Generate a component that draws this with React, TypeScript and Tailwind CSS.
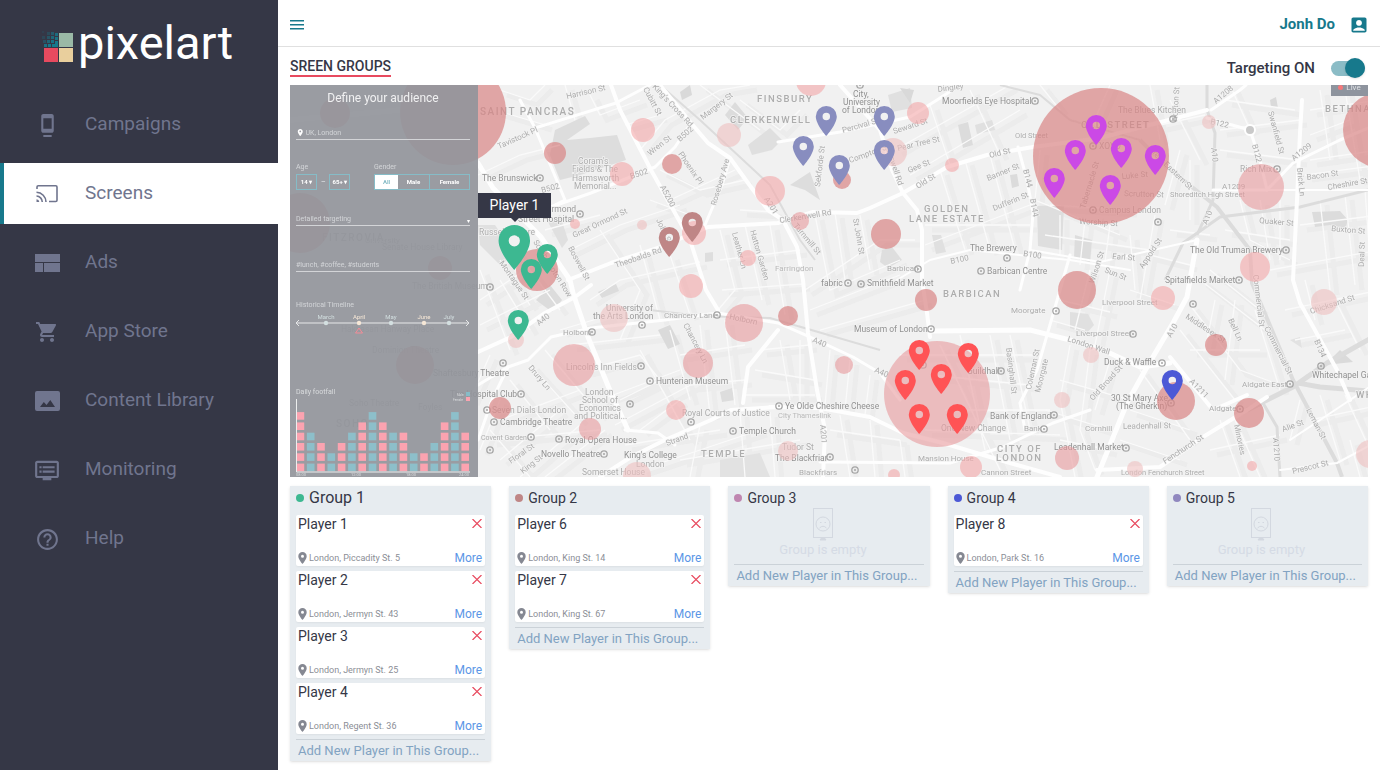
import React, { useState } from "react";
import { MdAccountBox, MdDock, MdDvr, MdHelpOutline, MdPlace, MdShoppingCart } from "react-icons/md";

/* ---------- Sidebar ---------- */

function LogoMark() {
  const cells: [number, number, number, number][] = [
    [0, 0, 2, 0.15], [5, 1, 3, 0.3], [9, 1, 3, 0.55], [13, 2, 3, 0.8],
    [0, 5, 3, 0.25], [5, 5, 3, 0.45], [9, 5, 3, 0.75], [13, 6, 3, 0.9],
    [1, 9, 3, 0.4], [5, 9, 3, 0.7], [9, 9, 3, 0.9], [13, 10, 3, 1],
    [2, 13, 3, 0.9], [6, 13, 3, 1], [10, 13, 3, 1], [13, 13, 3, 1],
  ];
  return (
    <svg width="32" height="34" viewBox="0 0 32 34" aria-hidden="true">
      {cells.map(([x, y, s, o], i) => (
        <rect key={i} x={x} y={y + 1} width={s} height={s} fill="#17798c" opacity={o} />
      ))}
      <rect x="17" y="3" width="14" height="14" fill="#9ab9a6" />
      <rect x="2" y="18" width="14" height="14" fill="#e84a5f" />
      <rect x="17" y="18" width="14" height="14" fill="#e9cf9d" />
    </svg>
  );
}

function CastIcon() {
  return (
    <svg width="22" height="20" viewBox="0 0 22 20" fill="none" stroke="currentColor" strokeWidth="1.6">
      <path d="M1 5V3q0-1.2 1.2-1.2h17.6Q21 1.800 21 3v13.300q0 1.200-1.200 1.200H13" />
      <path d="M.5 8.300a9.700 9.700 0 0 1 9.500 9.700M.5 12a6 6 0 0 1 5.800 6" />
      <path d="M.5 15.200A3 3 0 0 1 3.300 18H.5z" fill="currentColor" stroke="none" />
    </svg>
  );
}

function AdsIcon() {
  return (
    <svg width="25" height="18" viewBox="0 0 25 18" fill="currentColor">
      <path d="M0 0h25v8H0zM0 9h8v9H0zM9 9h16v9H9z" />
    </svg>
  );
}

function PictureIcon() {
  return (
    <svg width="25" height="20" viewBox="0 0 25 20" fill="currentColor" fillRule="evenodd">
      <path d="M2 0h21a2 2 0 0 1 2 2v16a2 2 0 0 1-2 2H2a2 2 0 0 1-2-2V2a2 2 0 0 1 2-2zM5 16h15l-4.700-7-3.800 5-2.700-3z" />
    </svg>
  );
}

const NAV = [
  { label: "Campaigns", icon: <MdDock size={25} /> },
  { label: "Screens", icon: <CastIcon />, active: true },
  { label: "Ads", icon: <AdsIcon /> },
  { label: "App Store", icon: <MdShoppingCart size={24} /> },
  { label: "Content Library", icon: <PictureIcon /> },
  { label: "Monitoring", icon: <MdDvr size={27} /> },
  { label: "Help", icon: <MdHelpOutline size={25} /> },
];

function Sidebar() {
  return (
    <aside className="flex w-[278px] shrink-0 flex-col bg-[#353746]">
      <a href="#home" className="flex h-[94px] items-center gap-1 pl-[42px] text-white">
        <LogoMark />
        <span className="pb-[10px] text-[47px] leading-none">pixelart</span>
      </a>
      <nav className="flex flex-col gap-2">
        {NAV.map((n) => (
          <a
            key={n.label}
            href="#nav"
            className={
              n.active
                ? "flex h-[61px] items-center gap-[25px] border-l-4 border-[#17798c] bg-white pb-[2px] pl-[30px] text-[19px] text-[#70758e]"
                : "flex h-[61px] items-center gap-[25px] border-l-4 border-transparent pb-[2px] pl-[30px] text-[19px] text-[#70758e]"
            }
          >
            <span className="flex w-[26px] justify-center pt-[3px]">{n.icon}</span>
            <span className="leading-6">{n.label}</span>
          </a>
        ))}
      </nav>
    </aside>
  );
}

/* ---------- Map ---------- */

const ROADS: [string, number][] = [
  ["M611 85L620 110L651 170L690 240L706 290L718 310", 4],
  ["M535 128L616 103L650 85", 3],
  ["M520 100L535 128L565 200L551 207", 3],
  ["M290 120L400 110L478 163L493 188L541 237L570 280L573 293L588 337L611 393L628 430", 5],
  ["M568 280L611 263L658 248L708 227L778 223L813 212L857 213L870 208L903 193L947 167L987 155L1033 147L1100 138L1207 110", 4],
  ["M551 207L591 193L655 167L675 147L691 123", 3],
  ["M660 85L691 123L708 143L730 158L748 183L768 210L783 220L797 247L803 280L808 333L817 390L825 430L823 477", 4],
  ["M730 158L722 185L705 225", 3],
  ["M778 142L840 132L910 117L937 100L960 85", 3],
  ["M840 85L880 130L892 170L903 193L917 210L922 230L922 280L927 313L930 337", 4],
  ["M1018 147L1027 180L1033 213L1030 250L1020 290", 3],
  ["M897 280L930 260L970 250L1070 260L1130 270", 2],
  ["M930 331L1030 330L1070 340L1103 350L1140 367L1170 363", 5],
  ["M1070 255L1060 290L1037 370L1020 403L1025 430", 3],
  ["M770 407L820 408L870 417L903 433L943 443L1010 463L1060 477", 4],
  ["M820 462L950 463L1003 447L1053 423L1090 410", 3],
  ["M478 352L511 337L545 313L575 297L591 285", 4],
  ["M478 385L508 367L528 360L551 337L591 328L665 320L718 313L778 323L810 337L853 357L880 373L900 400", 3],
  ["M600 477L631 457L665 440L711 420L731 410L778 407", 4],
  ["M778 330L748 367L743 403", 4],
  ["M625 430L658 433L675 445", 3],
  ["M478 440L492 400L508 367", 3],
  ["M1197 240L1187 297L1173 323L1147 367L1127 403L1097 477", 5],
  ["M1170 357L1213 410L1247 395", 4],
  ["M1097 470L1160 467L1203 437L1247 410L1267 397", 4],
  ["M1207 118L1250 130L1260 160L1267 190", 3],
  ["M1213 190L1267 190L1293 163L1340 140L1380 123", 3],
  ["M1302 100L1300 133L1297 200L1293 280L1300 303L1337 370L1350 400", 4],
  ["M1213 190L1380 190", 2],
  ["M1290 440L1350 400L1380 380", 2],
  ["M1280 470L1337 463L1380 440", 2],
  ["M1030 250L1100 262L1197 240", 2],
  ["M1211 110L1240 90L1246 85", 3],
];

const DARK_ROADS: [string, number][] = [
  ["M1207 85L1207 110L1215 133L1213 200L1197 235", 3],
  ["M1140 140L1167 167L1217 207L1250 250L1252 283L1293 380L1337 463L1342 477", 4],
  ["M1380 187L1300 207L1220 217L1183 243L1165 280", 3],
  ["M1247 410L1293 387L1327 363L1380 333", 5],
  ["M1298 383L1320 387L1380 392", 5],
  ["M1263 403L1277 427L1280 477", 3],
  ["M1000 85L1040 95L1070 120L1140 140", 2],
  ["M660 85L700 120L770 185L800 240L815 260", 2],
  ["M650 310L700 316L770 318L880 350", 2],
];

const MINOR_ROADS = [
  "M478 175L520 155L560 145M495 110L545 125M500 90L530 100L545 85M545 230L600 215M530 305L500 260",
  "M565 85L575 120M590 95L600 115L640 100M625 125L660 115M640 150L665 120L720 90L750 85",
  "M660 170L700 190L745 180M650 200L690 215M670 200L735 170M740 100L780 130L800 110M700 85L760 130",
  "M570 250L620 225L680 205M590 300L620 280L700 262M600 230L640 290L620 340M640 245L660 320M670 255L690 315",
  "M720 230L735 290L718 310M745 225L762 300M770 225L785 315M720 260L800 250M722 290L803 284M740 210L775 212",
  "M815 215L830 290L900 260M835 213L845 280M860 215L870 270M805 290L880 240L915 240M810 310L900 275M820 330L925 300",
  "M925 225L1030 225M925 245L1030 205M940 170L965 250M965 160L990 250M990 155L1015 250M910 175L1020 110M895 150L1010 85M930 105L950 165M970 90L1000 155",
  "M1040 150L1035 200L1120 235M1050 205L1130 210M1060 215L1060 255M1085 220L1080 265M1110 225L1105 262M1045 235L1150 250M1130 235L1135 290M1155 215L1140 300",
  "M1150 255L1190 265M1130 290L1175 305M1090 270L1075 330M1110 270L1095 345M1060 300L1110 312M1050 320L1085 330",
  "M940 345L1000 470M960 335L985 450M990 335L1010 440M1010 335L1030 430M900 355L1035 355M930 375L1030 385M945 410L1050 410M925 430L1060 435",
  "M1070 345L1060 400L1075 477M1090 350L1080 430L1095 470M1110 360L1095 410M1060 380L1130 400M1045 410L1110 430M1060 440L1110 450M1140 370L1190 440M1130 410L1190 430M1120 440L1180 460",
  "M1190 305L1240 370L1280 385M1180 330L1235 400M1200 280L1265 330M1210 270L1260 310M1190 350L1260 350M1215 300L1205 350M1235 300L1225 380M1255 310L1280 390",
  "M1270 270L1380 250M1285 310L1380 290M1295 340L1345 330M1300 225L1380 215M1320 200L1330 290M1345 195L1355 285M1365 190L1375 330M1335 300L1360 350M1305 280L1315 320",
  "M1220 130L1300 120M1220 150L1300 160M1225 100L1295 110M1240 200L1250 240L1290 260M1225 230L1290 240M1260 200L1270 260M1280 200L1280 260",
  "M1310 110L1380 100M1310 135L1350 120M1310 160L1380 150M1320 90L1330 160M1345 90L1360 180M1305 175L1380 165M1230 85L1250 130",
  "M480 300L540 260M480 325L550 290M500 280L530 330M515 250L560 310M480 270L510 350M490 355L470 400M530 365L580 420M545 350L600 415M510 380L550 430M500 400L480 450M500 420L580 390M490 440L600 430M500 460L560 410M520 477L580 425M545 477L605 430M490 430L530 477",
  "M560 330L610 315M570 345L660 335M585 370L640 355L660 380L620 400M600 400L680 370M615 425L700 380M640 430L680 400M625 445L720 430M640 350L690 440M670 330L690 400M700 325L710 415M725 320L735 405M680 355L745 345M690 385L745 380M640 470L760 430M700 425L690 477M740 412L745 477M770 412L775 477M680 460L800 440",
  "M755 370L815 380M760 350L810 345M745 395L815 395M780 340L790 400M800 340L800 405M830 350L825 405M850 360L845 410M870 375L865 415M830 430L900 440M840 415L850 477M870 420L875 477M900 440L905 477",
  "M1110 85L1090 130M1150 85L1160 140M1040 85L1060 110M1170 100L1200 160M1180 150L1165 205M1190 160L1190 220M1160 125L1205 115M1170 230L1210 235",
  "M1220 420L1240 477M1235 420L1260 477M1210 450L1280 435M1300 400L1290 440M1320 395L1340 460M1345 395L1370 450M1310 420L1380 405M1350 440L1360 477",
];

const BLOCKS: [string, string][] = [
  ["M555 130L585 116L590 124L567 140L590 138L617 135L626 160L580 175L560 180L550 155Z", "#dddddd"],
  ["M725 115L735 102L748 118L738 130Z", "#dcdcdc"],
  ["M680 92L690 85L692 95L682 100Z", "#d9d9d9"],
  ["M748 145L770 128L782 140L772 150L752 155Z", "#dfdfdf"],
  ["M790 185L810 172L820 200L805 190Z", "#dddddd"],
  ["M888 95L910 88L912 108L892 112Z", "#e0e0e0"],
  ["M958 125L968 122L973 145L963 148Z", "#dcdcdc"],
  ["M975 125L992 120L995 130L977 134Z", "#e0e0e0"],
  ["M1037 206L1064 205L1062 250L1038 246Z", "#dedede"],
  ["M1010 175L1017 174L1019 186L1012 188Z", "#dbdbdb"],
  ["M882 250L892 247L902 260L888 268L880 262Z", "#dedede"],
  ["M932 235L941 235L946 252L936 254Z", "#e0e0e0"],
  ["M1075 235L1092 240L1090 262L1074 258Z", "#dddddd"],
  ["M1312 212L1340 211L1348 220L1345 229L1330 225L1315 227Z", "#dcdcdc"],
  ["M1325 365L1340 350L1353 362Z", "#dadada"],
  ["M1070 312L1088 314L1094 325L1086 334L1070 328Z", "#e0e0e0"],
  ["M1270 100L1276 97L1278 108L1271 107Z", "#dadada"],
  ["M658 330L670 325L680 344L668 349Z", "#dadada"],
  ["M598 292L616 284L619 291L602 298Z", "#dcdcdc"],
  ["M536 300L550 285L562 300L552 312Z", "#dcdcdc"],
  ["M720 392L732 388L735 400L722 402Z", "#dddddd"],
  ["M720 460L760 453L770 477L720 477Z", "#e2e2e2"],
  ["M478 225L495 225L515 255L500 265L480 245Z", "#e0e0e0"],
  ["M548 222L560 215L568 240L562 248Z", "#e0e0e0"],
  ["M1290 340L1300 337L1302 348Z", "#e2e2e2"],
  ["M900 88L914 90L910 103Z", "#d9d9d9"],
  ["M705 253L713 252L713 261L705 262Z", "#dedede"],
];

type Label = [text: string, x: number, y: number, size: number, rotate?: number, color?: string];
const G = "#adadad";
const LABELS: Label[] = [
  ["Harrison St", 567, 99, 8, -13], ["Cubitt St", 643, 89, 8, 62], ["King's Cross Rd", 652, 87, 8, 47],
  ["Wren St", 650, 156, 8, -38], ["B502", 680, 142, 8, -42], ["B502", 631, 179, 8, -18], ["B502", 542, 193, 8, -15],
  ["Margery St", 703, 120, 8, -38], ["Tavistock Pl", 499, 149, 8, -24], ["Phoenix Pl", 678, 154, 8, 56],
  ["A5200", 660, 187, 8, 62], ["Rosebery Ave", 716, 206, 8, -74], ["John St", 656, 220, 8, 65],
  ["Great Ormond St", 574, 238, 8, -25], ["Boswell St", 568, 248, 8, 62], ["Theobalds Rd", 616, 268, 8, -19],
  ["Leather Ln", 732, 233, 8, 75], ["Hatton Garden", 750, 231, 8, 74], ["A201", 764, 199, 8, 58],
  ["The Brunswick", 482, 181, 8.5, 0, "#919191"], ["Coram's", 578, 164, 8.5, 0], ["Fields & The", 572, 172, 8.5, 0],
  ["Harmsworth", 572, 181, 8.5, 0], ["Memorial...", 574, 189, 8.5, 0], ["Great Ormond", 523, 212, 8.5, 0, "#9a9a9a"],
  ["Street Hospital", 518, 222, 8.5, 0, "#9a9a9a"], ["Russell Square", 479, 235, 8.5, 0], ["Montague St", 499, 263, 8, 55],
  ["Southampton Row", 533, 242, 8, 58], ["City,", 853, 97, 8.5, 0, "#919191"], ["University", 843, 105, 8.5, 0, "#919191"],
  ["of London", 842, 113, 8.5, 0, "#919191"], ["Percival St", 843, 133, 8, -16], ["Seward St", 894, 134, 8, -18],
  ["Pear Tree St", 898, 151, 8, -13], ["Compton St", 850, 163, 8, -20], ["Gee St", 909, 173, 8, -22],
  ["Old St", 918, 189, 8, -32], ["Old St", 990, 158, 8, -14], ["Banner St", 988, 181, 8, -22],
  ["Dufferin St", 994, 211, 8, -22], ["B144", 1023, 170, 8, 76], ["B144", 1030, 199, 8, 80],
  ["B100", 951, 264, 8, -12], ["B100", 1023, 256, 8, 8], ["Goswell Rd", 886, 148, 8, 72], ["Sekforde St", 820, 187, 8, -83],
  ["Clerkenwell Rd", 780, 223, 8, -9], ["Turnmill St", 793, 226, 8, 50], ["St John St", 853, 219, 8, 80],
  ["Farringdon", 775, 271, 8, 0, "#b9b9b9"], ["Barbican", 887, 271, 8, 0], ["Moorfields Eye Hospital", 942, 104, 8.5, 0, "#919191"],
  ["Dingley", 938, 92, 8, -8], ["Old Street", 1015, 138, 7.5, 0], ["The Brewery", 970, 251, 8.5, 0, "#919191"],
  ["Barbican Centre", 987, 274, 8.5, 0, "#919191"], ["fabric", 821, 286, 8.5, 0, "#919191"],
  ["Smithfield Market", 867, 286, 8.5, 0, "#919191"], ["Museum of London", 854, 332, 8.5, 0, "#919191"],
  ["Moorgate", 1011, 313, 8, 0], ["A40", 812, 342, 8, 22], ["A40", 874, 372, 8, 22], ["A201", 820, 425, 8, 85],
  ["Guildhall", 967, 374, 8.5, 0, "#919191"], ["Basinghall St", 1006, 348, 8, 83], ["Coleman St", 1031, 390, 8, -78],
  ["Moorgate", 1040, 393, 8, -76], ["Ye Olde Cheshire Cheese", 785, 409, 8.5, 0, "#919191"],
  ["City Thameslink", 778, 418, 7.5, 0, "#b9b9b9"], ["Temple Church", 739, 434, 8.5, 0, "#919191"],
  ["Tudor St", 782, 450, 8.5, 0], ["The Blackfriar", 775, 461, 8.5, 0, "#919191"], ["Blackfriars", 799, 475, 8, 0],
  ["Bank of England", 990, 419, 8.5, 0, "#919191"], ["One New Change", 941, 431, 8.5, 0], ["Bank", 1024, 431, 8, 0],
  ["Mansion House", 918, 461, 8, 0], ["Cannon Street", 981, 475, 8, 0], ["Leadenhall Market", 1054, 450, 8.5, 0, "#919191"],
  ["University of", 606, 311, 8.5, 0, "#9c9c9c"], ["the Arts London", 593, 319, 8.5, 0, "#9c9c9c"],
  ["Chancery Lane", 664, 318, 8, 0], ["Holborn", 563, 335, 8, 0], ["Holborn", 729, 319, 8, 12], ["A40", 539, 326, 8, -38],
  ["Chancery Ln", 683, 325, 8, 62], ["Drury Ln", 528, 368, 8, 50], ["Lincoln's Inn Fields", 566, 370, 8.5, 0],
  ["Hunterian Museum", 656, 384, 8.5, 0, "#919191"], ["London", 585, 395, 8.5, 0], ["School of", 582, 403, 8.5, 0],
  ["Economics", 579, 411, 8.5, 0], ["and Political...", 574, 419, 8.5, 0], ["Shaftesbury Theatre", 433, 376, 8.5, 0, "#919191"],
  ["The Hospital Club", 450, 397, 8.5, 0, "#919191"], ["Seven Dials London", 492, 413, 8.5, 0],
  ["Cambridge Theatre", 500, 425, 8.5, 0, "#919191"], ["Covent Garden", 481, 440, 7, 0], ["Floral St", 511, 464, 8, -35],
  ["King St", 523, 474, 8, -38], ["Royal Opera House", 565, 443, 8.5, 0, "#919191"], ["Novello Theatre", 541, 457, 8.5, 0, "#919191"],
  ["King's College", 624, 458, 8.5, 0, "#919191"], ["London", 636, 467, 8.5, 0], ["Somerset House", 582, 475, 8.5, 0],
  ["Strand", 667, 446, 8, -20], ["Royal Courts of Justice", 682, 416, 8.5, 0], ["Hoxton St", 1177, 122, 8, -86],
  ["A1208", 1216, 104, 8, -40], ["The Blues Kitchen", 1118, 113, 8.5, 0], ["B122", 1210, 124, 8, 12], ["B122", 1252, 145, 8, 75],
  ["A10", 1211, 148, 8, 83], ["A10", 1207, 225, 8, -68], ["Swanfield St", 1268, 112, 8, 75], ["A1209", 1294, 161, 8, -38],
  ["A1209", 1222, 189, 8, 0], ["Rich Mix", 1240, 172, 8.5, 0], ["Bacon St", 1307, 180, 8, -8], ["Cheshire St", 1328, 190, 8, -10],
  ["Shoreditch High Street", 1170, 197, 7.5, 0], ["Brick Ln", 1297, 168, 8, 84], ["Great Eastern St", 1148, 150, 8, 44],
  ["Luke St", 1122, 179, 8, -5], ["Scrutton St", 1124, 196, 8, 2], ["Campus London", 1099, 213, 8.5, 0], ["XOYO", 1099, 149, 8.5, 0],
  ["Worship St", 1079, 224, 8, 3], ["Quaker St", 1259, 223, 8, 5], ["Buxton St", 1331, 231, 8, 5], ["Deal St", 1364, 267, 8, -88],
  ["The Old Truman Brewery", 1190, 253, 8.5, 0, "#919191"], ["Spitalfields Market", 1165, 283, 8.5, 0, "#919191"],
  ["Earl St", 1112, 259, 8, 4], ["Sun St", 1104, 272, 8, 22], ["Appold St", 1143, 269, 8, -56], ["Wilson St", 1094, 284, 8, -72],
  ["Tabernacle St", 1085, 209, 8, -73], ["Liverpool Street", 1102, 305, 8, 0], ["Liverpool Street", 1076, 336, 8, 0],
  ["London Wall", 1067, 341, 8, 18], ["A10", 1171, 338, 8, -60], ["Middlesex St", 1185, 318, 8, 33], ["Bell Ln", 1228, 320, 8, 65],
  ["Commercial St", 1253, 275, 8, 83], ["Commercial St", 1264, 328, 8, 63], ["Chicksand St", 1311, 314, 8, -18],
  ["B134", 1314, 341, 8, 66], ["Duck & Waffle", 1104, 365, 8.5, 0, "#919191"], ["A1211", 1189, 382, 8, 45],
  ["Old Broad St", 1093, 401, 8, -48], ["Aldgate East", 1242, 387, 8, 0], ["Aldgate", 1209, 411, 8, 0],
  ["30 St Mary Axe", 1111, 401, 8.5, 0, "#919191"], ["(The Gherkin)", 1116, 409, 8.5, 0, "#919191"],
  ["Cornhill", 1085, 431, 8, 0], ["Leadenhall St", 1123, 429, 8, -1], ["Fenchurch St", 1165, 464, 8, -33],
  ["Minories", 1234, 425, 8, 78], ["London Fenchurch Street", 1121, 475, 7.5, 0], ["Alie St", 1283, 432, 8, -20],
  ["Leman St", 1306, 410, 8, 62], ["A1210", 1273, 438, 8, 86], ["Prescot St", 1293, 474, 8, -14],
  ["Whitechapel Gallery", 1312, 378, 8.5, 0, "#919191"],
  ["University", 365, 243, 8], ["Senate House Library", 382, 250, 8.5], ["The British Museum", 412, 289, 8.5],
  ["Hakkasan Hanway Place", 341, 332, 8.5], ["Dominion Theatre", 372, 353, 8.5], ["Soho Theatre", 349, 406, 8.5], ["Foyles", 418, 410, 8.5],
];

const AREAS: [string, number, number, number][] = [
  ["SAINT PANCRAS", 480, 115, 10], ["FINSBURY", 757, 102, 9.5], ["CLERKENWELL", 730, 123, 9.5],
  ["GOLDEN", 924, 212, 9.5], ["LANE ESTATE", 909, 222, 9.5], ["BARBICAN", 943, 297, 9.5],
  ["OLD STREET", 1081, 128, 9.5], ["BETHNAL", 1325, 112, 9.5], ["CITY OF", 997, 452, 9.5],
  ["LONDON", 996, 461, 9.5], ["TEMPLE", 701, 457, 9.5], ["WHITECHAPEL", 1356, 398, 9.5],
  ["FITZROVIA", 322, 241, 10], ["SOHO", 336, 427, 10],
];

const POIS: [number, number][] = [
  [540, 178], [580, 214], [490, 287], [642, 325], [592, 332], [717, 315], [503, 363], [521, 394], [487, 410], [494, 422],
  [531, 437], [490, 450], [559, 439], [604, 454], [630, 404], [650, 381], [641, 366], [691, 422], [733, 431], [779, 406],
  [830, 457], [855, 470], [848, 283], [861, 284], [918, 269], [931, 329], [1001, 371], [1054, 415], [1044, 429], [1007, 258],
  [981, 271], [1056, 311], [1035, 101], [1173, 119], [1158, 222], [1093, 210], [1277, 169], [1286, 250], [1239, 280],
  [1193, 304], [1133, 334], [1162, 363], [1321, 366], [1290, 384], [1171, 403], [1126, 448], [1240, 409], [860, 85], [1093, 146], [923, 365],
];

const HEAT = { d: "#d88585", m: "#e79a9d", l: "#f3a6a8", f: "#efc0c0" };
const SPOTS: [number, number, number, keyof typeof HEAT][] = [
  [453, 112, 53, "d"], [643, 130, 12, "l"], [555, 153, 11, "d"], [622, 174, 12, "l"], [672, 164, 10, "d"], [729, 135, 12, "f"],
  [770, 191, 15, "l"], [811, 81, 15, "l"], [918, 113, 11, "l"], [893, 152, 14, "f"], [842, 180, 9, "d"], [800, 221, 9, "m"],
  [886, 234, 15, "d"], [952, 165, 7, "l"], [1101, 156, 68, "d"], [1209, 122, 7, "f"], [1261, 187, 23, "m"], [1255, 267, 15, "l"],
  [1381, 130, 38, "d"], [575, 224, 5, "l"], [642, 225, 5, "f"], [694, 233, 12, "l"], [748, 258, 8, "l"], [537, 270, 21, "d"],
  [691, 286, 12, "l"], [614, 318, 14, "f"], [744, 323, 19, "m"], [698, 363, 15, "m"], [574, 365, 21, "m"], [676, 410, 10, "l"],
  [500, 408, 11, "d"], [590, 429, 11, "m"], [637, 476, 14, "f"], [516, 340, 8, "f"], [788, 316, 10, "d"], [926, 300, 11, "d"],
  [844, 365, 9, "m"], [937, 394, 53, "m"], [1077, 290, 19, "d"], [1062, 400, 8, "f"], [788, 451, 10, "f"], [894, 475, 6, "l"],
  [971, 467, 11, "l"], [1067, 458, 12, "m"], [1163, 298, 12, "l"], [1216, 345, 11, "d"], [1324, 302, 13, "f"], [1091, 355, 8, "f"],
  [1176, 401, 19, "d"], [1249, 413, 15, "d"], [1252, 466, 5, "l"], [1135, 469, 8, "f"], [1370, 454, 14, "f"],
  [300, 223, 30, "d"], [415, 365, 19, "d"], [335, 113, 15, "d"], [440, 268, 12, "d"],
];

const PINS: [number, number, string, number?][] = [
  [669, 227, "#bf8686"], [692, 212, "#bf8686"],
  [547, 244, "#3db891"], [531, 259, "#3db891"], [518, 310, "#3db891"], [514, 225, "#3db891", 2.25],
  [826, 106, "#888dbf"], [884, 106, "#888dbf"], [803, 136, "#888dbf"], [884, 140, "#888dbf"], [839, 155, "#888dbf"],
  [1096, 115, "#cb49e6"], [1075, 140, "#cb49e6"], [1121, 138, "#cb49e6"], [1155, 145, "#cb49e6"], [1110, 175, "#cb49e6"], [1054, 168, "#cb49e6"],
  [919, 340, "#ff5355"], [968, 343, "#ff5355"], [905, 370, "#ff5355"], [941, 364, "#ff5355"], [919, 404, "#ff5355"], [957, 404, "#ff5355"],
  [1172, 370, "#4c59d6"],
];

const PIN_PATH = "M0 0a7 7 0 0 0-7 7c0 5.250 7 13 7 13s7-7.750 7-13a7 7 0 0 0-7-7zm0 9.500a2.500 2.500 0 1 1 0-5 2.500 2.500 0 0 1 0 5z";

function CityMap() {
  return (
    <svg
      className="absolute inset-0 size-full"
      viewBox="290 85 1078 392"
      preserveAspectRatio="xMinYMin slice"
      role="img"
      aria-label="Audience heat map of London"
    >
      <rect x="290" y="85" width="2000" height="800" fill="#f1f1f1" />
      <g fill="none" stroke="#ebebeb" strokeWidth="5" opacity="0.9">
        {MINOR_ROADS.map((d, i) => <path key={i} d={d} transform="translate(7 5)" />)}
      </g>
      {BLOCKS.map(([d, fill], i) => <path key={i} d={d} fill={fill} />)}
      <g fill="none" stroke="#fafafa" strokeWidth="1.300">
        {MINOR_ROADS.map((d, i) => <path key={i} d={d} />)}
      </g>
      <g fill="none" stroke="#dcdcdc" strokeLinejoin="round">
        {DARK_ROADS.map(([d, w], i) => <path key={i} d={d} strokeWidth={w} />)}
      </g>
      <g fill="none" stroke="#fefefe" strokeLinejoin="round" strokeLinecap="round">
        {ROADS.map(([d, w], i) => <path key={i} d={d} strokeWidth={w} />)}
      </g>
      <circle cx="1250" cy="130" r="5" fill="#c9c9c9" stroke="#fff" strokeWidth="2" />
      <g fontFamily="Roboto, sans-serif" stroke="#f3f3f3" strokeWidth="1.500" paintOrder="stroke">
        {LABELS.map(([t, x, y, s, r = 0, c = G], i) => (
          <text key={i} fontSize={s} fill={c} transform={`translate(${x} ${y}) rotate(${r})`}>{t}</text>
        ))}
        {AREAS.map(([t, x, y, s]) => (
          <text key={t + y} x={x} y={y} fontSize={s} fontWeight="500" letterSpacing="1.500" fill="#adadad">{t}</text>
        ))}
      </g>
      {POIS.map(([x, y], i) => (
        <g key={i} fill="none" stroke="#a6a6a6">
          <circle cx={x} cy={y} r="3.200" strokeWidth="1.300" />
          <path d={`M${x - 1} ${y}h2`} strokeWidth="1.500" />
        </g>
      ))}
      {SPOTS.map(([x, y, r, k], i) => <circle key={i} cx={x} cy={y} r={r} fill={HEAT[k]} opacity={k === "d" ? 0.7 : 0.6} />)}
      {PINS.map(([x, y, c, s = 1.5], i) => (
        <path key={i} d={PIN_PATH} fill={c} fillRule="evenodd" transform={`translate(${x + 0.3} ${y}) scale(${s})`} />
      ))}
    </svg>
  );
}

/* ---------- Audience panel ---------- */

const BARS = [6, 4, 3, 2, 3, 4, 5, 6, 5, 4, 4, 2, 2, 3, 5, 6, 4];

function Footfall() {
  return (
    <svg className="mt-[51px] w-full" viewBox="296 387 174 90" role="img" aria-label="Daily footfall">
      <g fill="#d8dadc">
        <text x="296" y="394" fontSize="7">Daily footfall</text>
        <text x="457" y="396" fontSize="3">Male</text>
        <text x="453" y="401" fontSize="3">Female</text>
        <text x="296" y="476" fontSize="4">08:00</text>
        <text x="351" y="476" fontSize="4">12:00</text>
        <text x="406" y="476" fontSize="4">18:00</text>
        <text x="459" y="476" fontSize="4">24:00</text>
      </g>
      <rect x="466" y="392" width="4" height="4" fill="#86bcc7" />
      <rect x="466" y="397" width="4" height="4" fill="#fba3b0" />
      {BARS.map((n, i) =>
        Array.from({ length: n }, (_, j) => (
          <rect key={`${i}-${j}`} x={296.6 + i * 10.3} y={463.6 - j * 10.3} width="7.600" height="7.600" fill={i % 2 ? "#8dbfca" : "#fba3b0"} />
        )),
      )}
      <path d="M296.500 399v73h173.500" fill="none" stroke="#eceded" />
    </svg>
  );
}

function Timeline() {
  const months: [string, number, string][] = [
    ["March", 326, "#d3dfe0"], ["April", 359, "#f6e7d6"], ["May", 391, "#d3dfe0"], ["June", 424, "#f6e7d6"], ["July", 449, "#d3dfe0"],
  ];
  return (
    <svg className="w-full" viewBox="296 310 174 26" role="img" aria-label="Historical timeline">
      <path d="M296 323h173M299 320l-3 3 3 3M466 320l3 3-3 3" fill="none" stroke="#e6e7e8" />
      {months.map(([m, x, c]) => (
        <g key={m} fill={c}>
          <text x={x} y="319" fontSize="6" textAnchor="middle">{m}</text>
          <circle cx={x} cy="323" r="2.200" />
        </g>
      ))}
      <path d="M359 328l3.500 5h-7z" fill="none" stroke="#f28b96" />
    </svg>
  );
}

function AudiencePanel() {
  return (
    <form className="relative flex w-[188px] flex-col bg-[#92959b]/92 pr-2 pl-[6px] text-[7px] leading-[10px] text-[#d3d5d8]">
      <h2 className="text-center text-[12px] leading-[26px] text-[#f1f1f2]">Define your audience</h2>
      <label className="mt-[15px] flex h-[14px] items-center gap-px border-b border-[#d3d4d7]">
        <MdPlace size={9} className="text-white" />
        <input aria-label="Location" defaultValue="UK, London" className="w-full min-w-0 bg-transparent outline-none" />
      </label>
      <div className="mt-[22px] flex justify-between">
        <fieldset className="flex flex-col gap-[2px]">
          <legend className="contents">Age</legend>
          <div className="flex items-center gap-1 font-bold">
            <select aria-label="Minimum age" className="h-4 w-[21px] appearance-none border border-[#86bcc7] text-center text-[6px] text-white">
              <option>14 ▾</option>
            </select>
            <span>–</span>
            <select aria-label="Maximum age" className="h-4 w-[21px] appearance-none border border-[#86bcc7] text-center text-[6px] text-white">
              <option>65+ ▾</option>
            </select>
          </div>
        </fieldset>
        <fieldset className="flex flex-col gap-[2px]">
          <legend className="contents">Gender</legend>
          <div className="flex h-4 w-24 border border-[#86bcc7] text-[6px] font-bold text-white">
            <button type="button" className="w-[23px] bg-white text-[#86bcc7]">All</button>
            <button type="button" className="w-8 border-r border-[#86bcc7]">Male</button>
            <button type="button" className="grow">Female</button>
          </div>
        </fieldset>
      </div>
      <label className="mt-[22px] flex h-[14px] items-center justify-between border-b border-[#d3d4d7]">
        <select aria-label="Detailed targeting" className="grow appearance-none bg-transparent">
          <option>Detailed targeting</option>
        </select>
        <span className="pt-1 text-[6px] text-white">▾</span>
      </label>
      <input aria-label="Tags" defaultValue="#lunch, #coffee, #students" className="mt-8 h-[14px] w-full border-b border-[#d3d4d7] bg-transparent outline-none" />
      <h3 className="mt-7">Historical Timeline</h3>
      <Timeline />
      <Footfall />
    </form>
  );
}

/* ---------- Groups ---------- */

interface Player { name: string; address: string }
interface Group { name: string; dot: string; selected?: boolean; players: Player[] }

const GROUPS: Group[] = [
  {
    name: "Group 1", dot: "bg-[#3db891]", selected: true,
    players: [
      { name: "Player 1", address: "London, Piccadity St. 5" },
      { name: "Player 2", address: "London, Jermyn St. 43" },
      { name: "Player 3", address: "London, Jermyn St. 25" },
      { name: "Player 4", address: "London, Regent St. 36" },
    ],
  },
  {
    name: "Group 2", dot: "bg-[#bf8686]",
    players: [
      { name: "Player 6", address: "London, King St. 14" },
      { name: "Player 7", address: "London, King St. 67" },
    ],
  },
  { name: "Group 3", dot: "bg-[#bf86b0]", players: [] },
  { name: "Group 4", dot: "bg-[#4c59d6]", players: [{ name: "Player 8", address: "London, Park St. 16" }] },
  { name: "Group 5", dot: "bg-[#9088bf]", players: [] },
];

function PlayerCard({ name, address }: Player) {
  return (
    <li className="flex h-[51px] flex-col justify-between rounded-xs bg-white pr-[3px] pl-[2px] shadow-xs">
      <div className="flex items-start justify-between">
        <h4 className="text-[14px] leading-[18px] text-[#353746]">{name}</h4>
        <button type="button" aria-label={`Remove ${name}`} className="pt-1">
          <svg width="10" height="9" viewBox="0 0 10 9" stroke="#e84a5f" strokeWidth="1.200"><path d="M.5 0l9 9M9.500 0l-9 9" /></svg>
        </button>
      </div>
      <div className="flex items-center justify-between">
        <span className="flex items-center gap-[2px] text-[9px] leading-4 text-[#8b8e96]">
          <svg width="9" height="12" viewBox="-7 0 14 20" fill="#858892" fillRule="evenodd"><path d={PIN_PATH} /></svg>
          {address}
        </span>
        <a href="#more" className="text-[12px] leading-4 text-[#5b96e6]">More</a>
      </div>
    </li>
  );
}

function EmptyGroup() {
  return (
    <div className="flex flex-col items-center pr-3 pb-[5px] text-[#d5dbe5]">
      <svg width="20" height="33" viewBox="0 0 20 33" fill="none" stroke="#d3d8e0">
        <rect x=".5" y=".5" width="19" height="29" />
        <circle cx="10" cy="16" r="7" />
        <path d="M6.500 20q3.500-3.500 7 0M7 14.500h1.500M11.500 14.500H13" />
        <path d="M7 32l1.500-2h3l1.500 2z" fill="#d3d8e0" />
      </svg>
      <p className="text-[13px] leading-[18px]">Group is empty</p>
    </div>
  );
}

function GroupColumn({ group }: { group: Group }) {
  const empty = group.players.length === 0;
  return (
    <section className="bg-[#e7ecf0] px-[6px] shadow-sm">
      <header className={empty ? "flex h-[22px] items-center gap-[5px] pt-[2px]" : "flex h-[29px] items-center gap-[5px] pb-[5px]"}>
        <span className={`size-2 rounded-full ${group.dot}`} />
        <h3 className={group.selected ? "text-[16px] leading-5 text-[#353746]" : "text-[14px] leading-5 text-[#353746]"}>{group.name}</h3>
      </header>
      {empty ? (
        <EmptyGroup />
      ) : (
        <ul className="flex flex-col gap-[5px]">
          {group.players.map((p) => <PlayerCard key={p.name} {...p} />)}
        </ul>
      )}
      <button
        type="button"
        className={
          empty
            ? "block w-full border-t border-[#cbd2d8] pl-[2px] text-left text-[13px] leading-[21px] text-[#82a3c2]"
            : "mt-[5px] block w-full border-t border-[#cbd2d8] pl-[2px] text-left text-[13px] leading-[21px] text-[#82a3c2]"
        }
      >
        Add New Player in This Group...
      </button>
    </section>
  );
}

/* ---------- Page ---------- */

export default function App() {
  const [targeting, setTargeting] = useState(true);
  return (
    <div className="flex min-h-screen bg-white font-['Roboto',sans-serif]">
      <Sidebar />
      <div className="flex min-w-0 grow flex-col">
        <header className="flex h-[47px] items-center justify-between border-b border-[#e0e0e0] pt-[3px] pr-[11px] pl-3">
          <button type="button" aria-label="Toggle menu" className="text-[#17798c]">
            <svg width="14" height="10" viewBox="0 0 14 10" fill="currentColor"><path d="M0 0h14v1.500H0zM0 4h14v1.500H0zM0 8h14v1.500H0z" /></svg>
          </button>
          <a href="#account" className="flex items-center gap-[14px] text-[15px] font-bold text-[#17798c]">
            Jonh Do
            <MdAccountBox size={20} />
          </a>
        </header>
        <main className="flex flex-col px-3">
          <div className="flex h-[38px] items-center justify-between">
            <h1 className="border-b-2 border-[#e84a5f] pt-px text-[14px] leading-[18px] font-medium text-[#353746]">SREEN GROUPS</h1>
            <label className="flex items-center gap-4 pt-1 pr-[3px] text-[15px] leading-5 font-medium text-[#353746]">
              Targeting ON
              <span className="flex h-[15px] w-[34px] items-center justify-end rounded-full bg-[#8bbcc6]">
                <input type="checkbox" role="switch" checked={targeting} onChange={() => setTargeting(!targeting)} className="size-5 shrink-0 appearance-none rounded-full bg-[#17798c] shadow-sm" />
              </span>
            </label>
          </div>
          <div className="relative flex h-[392px] overflow-hidden">
            <CityMap />
            <AudiencePanel />
            <div className="absolute top-[108px] left-[188px] flex h-[25px] w-[73px] items-center justify-center bg-[#353746] text-[14px] text-white">
              Player 1
              <span className="absolute top-[25px] border-x-4 border-t-4 border-x-transparent border-t-[#353746]" />
            </div>
            <div className="absolute top-0 right-0 flex h-[11px] w-[37px] items-start justify-center gap-[3px] overflow-hidden bg-[#8e949e] text-[8px] leading-[5px] text-[#e0e2e5]">
              <span className="size-[5px] rounded-full bg-[#f4797b]" />
              Live
            </div>
          </div>
          <div className="grid grid-cols-5 items-start gap-[18px] pt-[9px]">
            {GROUPS.map((g) => <GroupColumn key={g.name} group={g} />)}
          </div>
        </main>
      </div>
    </div>
  );
}
